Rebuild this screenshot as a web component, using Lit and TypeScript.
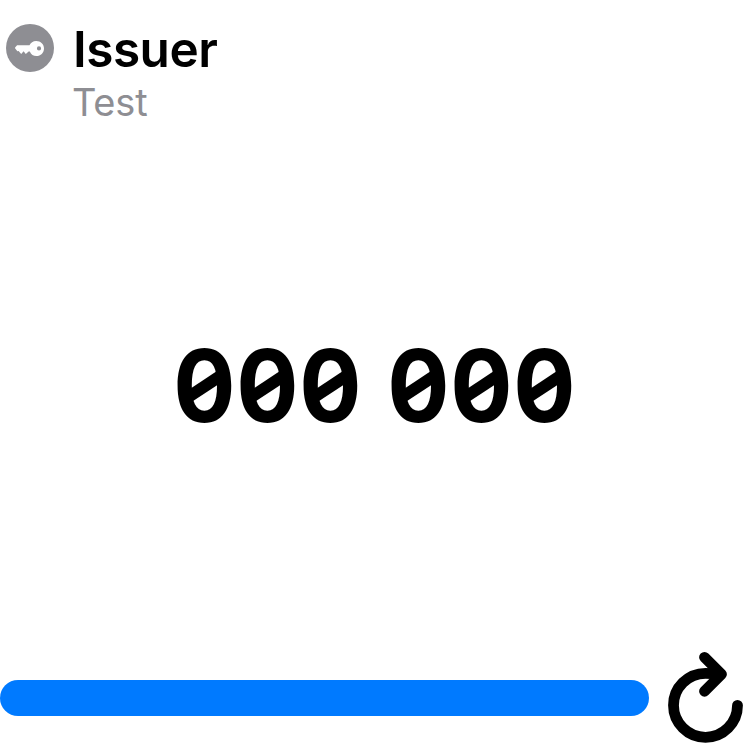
import { LitElement, html, css } from "lit";
import { customElement } from "lit/decorators.js";

@customElement("app-root")
export class AppRoot extends LitElement {
  static styles = css`
    :host {
      display: flex;
      flex-direction: column;
      box-sizing: border-box;
      width: 100%;
      height: 100vh;
      overflow: hidden;
      background: #fff;
      color: #000;
      font-family: Inter, "Liberation Sans", sans-serif;
    }
    .header {
      display: flex;
      gap: 18px;
      padding: 24px 0 0 6px;
      height: 100px;
    }
    .badge {
      display: block;
      width: 48px;
      height: 48px;
    }
    .issuer {
      padding-left: 1px;
      font-size: 49.5px;
      font-weight: 600;
      line-height: 50px;
      letter-spacing: -0.5px;
    }
    .account {
      margin-top: 4px;
      font-size: 38px;
      line-height: 48px;
      letter-spacing: -0.2px;
      color: #8e8e93;
    }
    .code {
      flex: 1;
      display: flex;
      justify-content: center;
      align-items: center;
      gap: 25px;
      padding: 2px 2px 0 0;
      font-size: 100px;
      font-weight: 700;
      line-height: 1;
      font-feature-settings: "tnum";
    }
    .group {
      display: flex;
    }
    .digit {
      position: relative;
      width: 63px;
      display: flex;
      justify-content: center;
      transform: scaleX(0.965);
    }
    .zero::after {
      content: "";
      position: absolute;
      left: 50%;
      top: 50%;
      width: 37px;
      height: 11.8px;
      background: currentColor;
      transform: translate(-50%, -50%) rotate(-32.5deg);
    }
    .footer {
      display: flex;
      align-items: center;
      height: 104px;
    }
    .progress {
      width: 649px;
      height: 36px;
      border-radius: 18px;
      background: #007aff;
    }
    .refresh {
      display: block;
      width: 101px;
      height: 104px;
    }
  `;

  private code = "000 000";

  render() {
    return html`
      <div class="header">
        <svg class="badge" viewBox="0 0 48 48">
          <circle cx="24" cy="24" r="24" fill="#8e8e93" />
          <path
            fill="#fff"
            fill-rule="evenodd"
            d="M11.1 21.3H23.5C24.7 18.7 27 16.9 30.2 16.9C34.7 16.9 38 20.1 38 24.4C38 28.7 34.7 32 30.4 32C27.4 32 25 30.3 23.8 27.4H22.6L19.8 30.1L17.6 27.2L15.2 29.9L12.6 27.1L11.4 27.2L9.2 24.5Q8.8 23.9 9.3 23.3ZM33 22.3A2.1 2.1 0 1 0 33 26.5A2.1 2.1 0 1 0 33 22.3Z"
          />
        </svg>
        <div>
          <div class="issuer">Issuer</div>
          <div class="account">Test</div>
        </div>
      </div>
      <div class="code">
        ${this.code.split(" ").map(
          (group) => html`<div class="group">
            ${[...group].map(
              (d) => html`<span class="digit ${d === "0" ? "zero" : ""}">${d}</span>`
            )}
          </div>`
        )}
      </div>
      <div class="footer">
        <div class="progress"></div>
        <svg class="refresh" viewBox="649 646 101 104" fill="none" stroke="#000"
          stroke-width="10.8" stroke-linecap="round" stroke-linejoin="round">
          <path d="M737.5 705.3A32 32 0 1 1 705.5 673.3Q712 673.3 719 674.3" />
          <path d="M704.5 657.3L721.5 674.3L704.5 691.3" />
        </svg>
      </div>
    `;
  }
}
